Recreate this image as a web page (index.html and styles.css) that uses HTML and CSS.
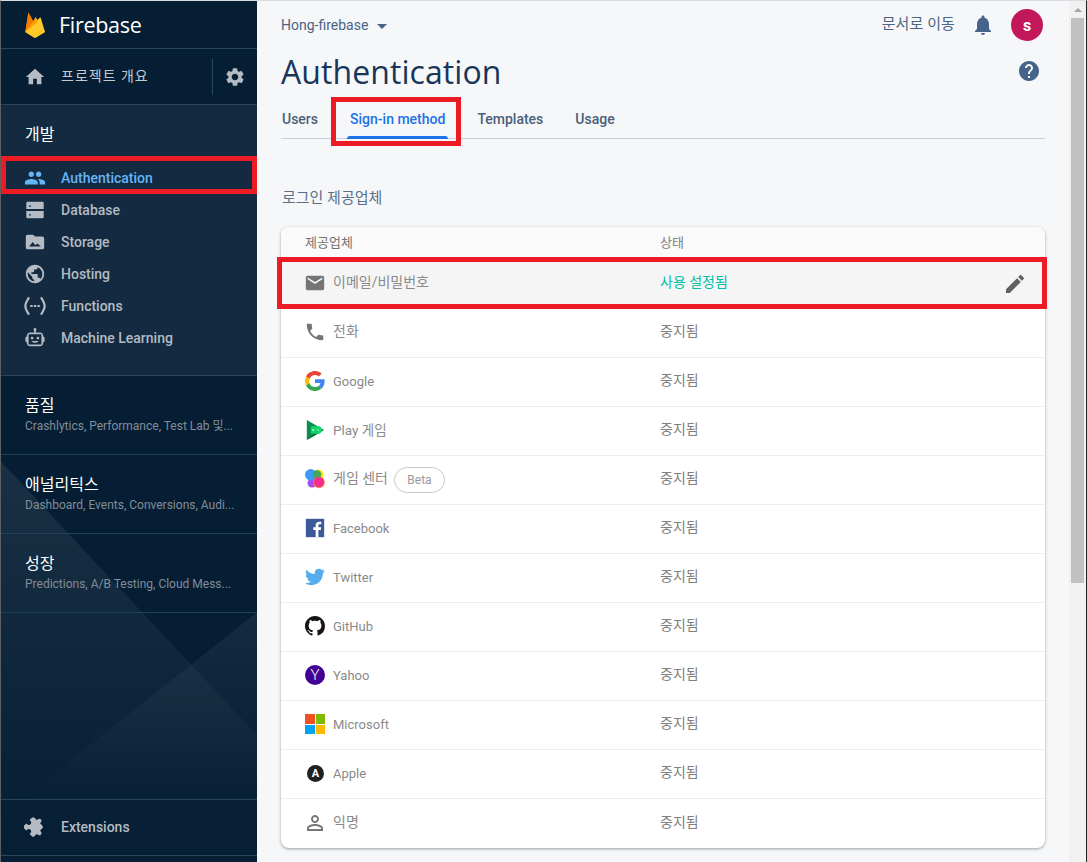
FILE: index.html
```html
<!DOCTYPE html>
<html lang="ko">
    <head>
        <meta charset="UTF-8">
        <meta name="viewport" content="width=device-width, initial-scale=1.0">
        <title>Authentication - Firebase</title>
        <link rel="stylesheet" href="styles.css">
    </head>
    <body>
        <!--Sidebar-->
        <nav class="side">
            <svg class="side-decor" viewBox="0 0 256 862" preserveAspectRatio="none" aria-hidden="true">
                <defs>
                    <linearGradient id="fadeA" x1="0" y1="0" x2="0" y2="1">
                        <stop offset="0" stop-color="#fff" stop-opacity="0.08"/>
                        <stop offset="1" stop-color="#fff" stop-opacity="0"/>
                    </linearGradient>
                    <linearGradient id="fadeB" x1="0" y1="0" x2="0" y2="1">
                        <stop offset="0" stop-color="#fff" stop-opacity="0.06"/>
                        <stop offset="1" stop-color="#fff" stop-opacity="0"/>
                    </linearGradient>
                </defs>
                <polygon points="0,461 256,735 256,862 0,862" fill="url(#fadeA)"/>
                <polygon points="256,612 20,800 256,800" fill="url(#fadeB)"/>
            </svg>

            <div class="side-logo">
                <svg class="flame" viewBox="0 0 20 26">
                    <path fill="#ffa000" d="M.3 20 3.4.4 8.3 9.4 10.6 5l9.4 15-10 6z"/>
                    <path fill="#f57c00" d="M.3 20 3.4.4 8.3 9.4z"/>
                    <path fill="#ffca28" d="M.3 20 15 5.6c.3-.3.6-.2.7.2L20 20l-8.6 5.3c-.9.5-1.9.5-2.8 0z"/>
                    <path fill="#ffa000" d="M.3 20 8.3 9.4 10.6 5l2 5z"/>
                </svg>
                <span class="logo-text">Firebase</span>
            </div>

            <div class="side-overview">
                <svg class="ico" viewBox="0 0 24 24"><path d="M10 20v-6h4v6h5v-8h3L12 3 2 12h3v8z"/></svg>
                <span class="overview-text">프로젝트 개요</span>
                <span class="overview-gear">
                    <svg class="ico" viewBox="0 0 24 24"><path d="M19.14 12.94c.04-.3.06-.61.06-.94 0-.32-.02-.64-.07-.94l2.03-1.58c.18-.14.23-.41.12-.61l-1.92-3.32c-.12-.22-.37-.29-.59-.22l-2.39.96c-.5-.38-1.03-.7-1.62-.94l-.36-2.54c-.04-.24-.24-.41-.48-.41h-3.84c-.24 0-.43.17-.47.41l-.36 2.54c-.59.24-1.13.57-1.62.94l-2.39-.96c-.22-.08-.47 0-.59.22L2.74 8.87c-.12.21-.08.47.12.61l2.03 1.58c-.05.3-.09.63-.09.94s.02.64.07.94l-2.03 1.58c-.18.14-.23.41-.12.61l1.92 3.32c.12.22.37.29.59.22l2.39-.96c.5.38 1.03.7 1.62.94l.36 2.54c.05.24.24.41.48.41h3.84c.24 0 .44-.17.47-.41l.36-2.54c.59-.24 1.13-.56 1.62-.94l2.39.96c.22.08.47 0 .59-.22l1.92-3.32c.12-.22.07-.47-.12-.61l-2.01-1.58zM12 15.6c-1.98 0-3.6-1.62-3.6-3.6s1.62-3.6 3.6-3.6 3.6 1.62 3.6 3.6-1.62 3.6-3.6 3.6z"/></svg>
                </span>
            </div>

            <div class="side-dev">
                <div class="side-title">개발</div>
                <a class="side-item is-active">
                    <svg class="ico" viewBox="0 0 24 24"><path d="M16 11c1.66 0 2.99-1.34 2.99-3S17.66 5 16 5c-1.66 0-3 1.34-3 3s1.34 3 3 3zm-8 0c1.66 0 2.99-1.34 2.99-3S9.66 5 8 5C6.34 5 5 6.34 5 8s1.34 3 3 3zm0 2c-2.33 0-7 1.17-7 3.5V19h14v-2.5c0-2.33-4.67-3.5-7-3.5zm8 0c-.29 0-.62.02-.97.05 1.16.84 1.97 1.97 1.97 3.45V19h6v-2.5c0-2.33-4.67-3.5-7-3.5z"/></svg>
                    Authentication
                    <span class="redbox redbox-side"></span>
                </a>
                <a class="side-item">
                    <svg class="ico" viewBox="0 0 24 24"><path fill-rule="evenodd" d="M4 3h16a1.5 1.5 0 0 1 1.5 1.5v6.5h-19V4.500A1.500 1.500 0 0 1 4 3zm1.500 4v1.500h2V7zM2.500 13h19v6.500A1.500 1.500 0 0 1 20 21H4a1.500 1.500 0 0 1-1.500-1.500zm3 3.500V18h2v-1.500z"/></svg>
                    Database
                </a>
                <a class="side-item">
                    <svg class="ico" viewBox="0 0 24 24"><path fill-rule="evenodd" d="M20 6h-8l-2-2H4c-1.100 0-2 .9-2 2v12c0 1.100.9 2 2 2h16c1.100 0 2-.9 2-2V8c0-1.100-.9-2-2-2zM5.500 17l4-5 3 3.500 2-2 4 3.500z"/></svg>
                    Storage
                </a>
                <a class="side-item">
                    <svg class="ico" viewBox="0 0 24 24"><path d="M12 2C6.480 2 2 6.480 2 12s4.480 10 10 10 10-4.480 10-10S17.520 2 12 2zm-1 17.930c-3.950-.49-7-3.850-7-7.930 0-.62.08-1.210.21-1.790L9 15v1c0 1.100.9 2 2 2v1.930zm6.900-2.540c-.26-.81-1-1.390-1.900-1.390h-1v-3c0-.55-.45-1-1-1H8v-2h2c.55 0 1-.45 1-1V7h2c1.100 0 2-.9 2-2v-.41c2.930 1.190 5 4.060 5 7.410 0 2.080-.8 3.970-2.100 5.390z"/></svg>
                    Hosting
                </a>
                <a class="side-item">
                    <svg class="ico" viewBox="0 0 24 24"><path d="M5.500 2.500C2.500 7 1.500 9.500 1.500 12s1 5 4 9.500M18.500 2.500c3 4.500 4 7 4 9.500s-1 5-4 9.500" fill="none" stroke="currentColor" stroke-width="2.400"/><path d="M6.800 11h2.600v2H6.800zm3.900 0h2.600v2h-2.600zm3.900 0h2.600v2h-2.600z"/></svg>
                    Functions
                </a>
                <a class="side-item">
                    <svg class="ico" viewBox="0 0 24 24"><path fill-rule="evenodd" d="M12 1a1.600 1.600 0 0 1 1 2.850V6h4a4 4 0 0 1 4 4v.3a2 2 0 0 1 1.500 1.950v2.500A2 2 0 0 1 21 16.700v.3a4 4 0 0 1-4 4H7a4 4 0 0 1-4-4v-.3a2 2 0 0 1-1.500-1.950v-2.500A2 2 0 0 1 3 10.300V10a4 4 0 0 1 4-4h4V3.850A1.600 1.600 0 0 1 12 1zM5 8v11h14V8zM8.800 10.500a1.500 1.500 0 1 0 0 3 1.500 1.500 0 0 0 0-3zm6.400 0a1.500 1.500 0 1 0 0 3 1.500 1.500 0 0 0 0-3zM8 15.200c1 1.300 2.400 1.900 4 1.900s3-.6 4-1.900z"/></svg>
                    Machine Learning
                </a>
            </div>

            <div class="side-group">
                <div class="side-title">품질</div>
                <div class="side-sub">Crashlytics, Performance, Test Lab 및...</div>
            </div>
            <div class="side-group">
                <div class="side-title">애널리틱스</div>
                <div class="side-sub">Dashboard, Events, Conversions, Audi...</div>
            </div>
            <div class="side-group">
                <div class="side-title">성장</div>
                <div class="side-sub">Predictions, A/B Testing, Cloud Mess...</div>
            </div>

            <div class="side-spacer"></div>

            <a class="side-extensions">
                <svg class="ico" viewBox="0 0 24 24"><path transform="rotate(45 12 12) translate(.6 .6) scale(.95)" d="M20.500 11H19V7c0-1.100-.9-2-2-2h-4V3.500C13 2.120 11.880 1 10.500 1S8 2.120 8 3.500V5H4c-1.100 0-1.990.9-1.990 2v3.800H3.500c1.490 0 2.700 1.210 2.700 2.700s-1.210 2.700-2.700 2.700H2V20c0 1.100.9 2 2 2h3.800v-1.500c0-1.490 1.210-2.700 2.700-2.700 1.490 0 2.700 1.210 2.700 2.700V22H17c1.100 0 2-.9 2-2v-4h1.500c1.380 0 2.500-1.120 2.500-2.500S21.880 11 20.500 11z"/></svg>
                Extensions
            </a>
            <div class="side-foot"></div>
        </nav>

        <!--Main content-->
        <main class="main">
            <div class="topbar">
                <span class="project">Hong-firebase<i class="caret"></i></span>
                <span class="docs">문서로 이동</span>
                <svg class="ico-top" viewBox="0 0 24 24"><path d="M12 22c1.100 0 2-.9 2-2h-4c0 1.100.89 2 2 2zm6-6v-5c0-3.070-1.640-5.640-4.500-6.320V4c0-.83-.67-1.500-1.500-1.500s-1.500.67-1.500 1.500v.68C7.630 5.360 6 7.920 6 11v5l-2 2v1h16v-1l-2-2z"/></svg>
                <span class="avatar">s</span>
            </div>

            <div class="title-row">
                <h1 class="title">Authentication</h1>
                <svg class="ico-top" viewBox="0 0 24 24"><path d="M12 2C6.480 2 2 6.480 2 12s4.480 10 10 10 10-4.480 10-10S17.520 2 12 2zm1 17h-2v-2h2v2zm2.070-7.750l-.9.920C13.450 12.900 13 13.500 13 15h-2v-.5c0-1.100.45-2.100 1.170-2.830l1.240-1.260c.37-.36.59-.86.59-1.410 0-1.100-.9-2-2-2s-2 .9-2 2H8c0-2.210 1.790-4 4-4s4 1.790 4 4c0 .88-.36 1.680-.93 2.250z"/></svg>
            </div>

            <div class="tabs">
                <a class="tab">Users</a>
                <a class="tab is-active">Sign-in method<span class="redbox redbox-tab"></span></a>
                <a class="tab">Templates</a>
                <a class="tab">Usage</a>
            </div>

            <h2 class="section-label">로그인 제공업체</h2>

            <div class="card">
                <div class="row row-head">
                    <span class="col-name">제공업체</span>
                    <span class="col-status">상태</span>
                </div>

                <div class="row row-on">
                    <span class="col-name">
                        <svg class="pico pico-m" viewBox="0 0 24 24" fill="#757575"><path d="M20 4H4c-1.100 0-1.990.9-1.990 2L2 18c0 1.100.9 2 2 2h16c1.100 0 2-.9 2-2V6c0-1.100-.9-2-2-2zm0 4l-8 5-8-5V6l8 5 8-5v2z"/></svg>
                        <span class="ko">이메일/비밀번호</span>
                    </span>
                    <span class="col-status status-on">사용 설정됨</span>
                    <svg class="pencil" viewBox="0 0 24 24"><path d="M3 17.250V21h3.750L17.810 9.940l-3.750-3.750L3 17.250zM20.710 7.040c.39-.39.39-1.020 0-1.410l-2.340-2.340c-.39-.39-1.020-.39-1.410 0l-1.830 1.830 3.750 3.750 1.830-1.830z"/></svg>
                    <span class="redbox redbox-row"></span>
                </div>

                <div class="row">
                    <span class="col-name">
                        <svg class="pico pico-m" viewBox="0 0 24 24" fill="#757575"><path d="M6.620 10.790c1.440 2.830 3.760 5.140 6.590 6.590l2.200-2.200c.27-.27.67-.36 1.020-.24 1.120.37 2.330.57 3.570.57.55 0 1 .45 1 1V20c0 .55-.45 1-1 1-9.390 0-17-7.610-17-17 0-.55.45-1 1-1h3.500c.55 0 1 .45 1 1 0 1.250.2 2.450.57 3.570.11.35.03.74-.25 1.020l-2.200 2.200z"/></svg>
                        <span class="ko">전화</span>
                    </span>
                    <span class="col-status">중지됨</span>
                </div>

                <div class="row">
                    <span class="col-name">
                        <svg class="pico" viewBox="0 0 48 48">
                            <path fill="#EA4335" d="M24 9.500c3.540 0 6.710 1.220 9.210 3.600l6.850-6.850C35.900 2.380 30.470 0 24 0 14.620 0 6.510 5.380 2.560 13.220l7.980 6.190C12.430 13.720 17.740 9.500 24 9.500z"/>
                            <path fill="#4285F4" d="M46.980 24.550c0-1.570-.15-3.090-.38-4.550H24v9.020h12.940c-.58 2.960-2.260 5.480-4.780 7.180l7.730 6c4.510-4.180 7.090-10.360 7.090-17.650z"/>
                            <path fill="#FBBC05" d="M10.530 28.590c-.48-1.450-.76-2.990-.76-4.590s.27-3.140.76-4.590l-7.980-6.190C.92 16.460 0 20.120 0 24c0 3.880.92 7.540 2.560 10.780l7.970-6.190z"/>
                            <path fill="#34A853" d="M24 48c6.480 0 11.930-2.130 15.890-5.810l-7.730-6c-2.150 1.450-4.920 2.300-8.160 2.300-6.260 0-11.570-4.220-13.470-9.910l-7.980 6.190C6.510 42.620 14.620 48 24 48z"/>
                        </svg>
                        Google
                    </span>
                    <span class="col-status">중지됨</span>
                </div>

                <div class="row">
                    <span class="col-name">
                        <svg class="pico" viewBox="1 1 20 22">
                            <path fill="#0a8f4c" d="M2 1v22l19-11z"/>
                            <path fill="#056b38" d="M2 23l7-6.500 6-1.500 6-3z"/>
                            <path fill="#0ed66a" d="M6.500 8h8a4 4 0 0 1 0 8h-8z"/>
                            <path fill="#c8ffe0" d="M8.500 11h1v.6h.6v1h-.6v.6h-1v-.6h-.6v-1h.6zm4.500 0h1v1h-1zm1.500 1h1v1h-1z"/>
                        </svg>
                        <span class="ko-mix">Play 게임</span>
                    </span>
                    <span class="col-status">중지됨</span>
                </div>

                <div class="row">
                    <span class="col-name">
                        <svg class="pico" viewBox="0 0 20 20">
                            <circle cx="13" cy="6" r="5.500" fill="#ffe000"/>
                            <circle cx="7" cy="14" r="4.500" fill="#a64df0"/>
                            <circle cx="5.700" cy="5.800" r="5.700" fill="#3d9bf5"/>
                            <circle cx="12" cy="5.500" r="4.200" fill="#3fa85a"/>
                            <circle cx="14" cy="13.500" r="5.800" fill="#ff9052"/>
                            <circle cx="14" cy="13" r="5.200" fill="#f5308a"/>
                        </svg>
                        <span class="ko">게임 센터</span>
                        <span class="beta">Beta</span>
                    </span>
                    <span class="col-status">중지됨</span>
                </div>

                <div class="row">
                    <span class="col-name">
                        <svg class="pico pico-m" viewBox="0 0 24 24">
                            <path fill="#3b5998" d="M2 2h20v20H2z"/>
                            <path fill="#fff" d="M15.800 22v-7.700h2.600l.4-3h-3V9.400c0-.87.24-1.460 1.500-1.460h1.600V5.250c-.28-.04-1.230-.12-2.330-.12-2.300 0-3.870 1.400-3.870 3.980v2.200h-2.600v3h2.600V22z"/>
                        </svg>
                        Facebook
                    </span>
                    <span class="col-status">중지됨</span>
                </div>

                <div class="row">
                    <span class="col-name">
                        <svg class="pico" viewBox="0 0 24 24"><path fill="#55acee" d="M23.950 4.570a10 10 0 0 1-2.820.77 4.960 4.960 0 0 0 2.160-2.720c-.95.55-2 .96-3.130 1.190a4.920 4.920 0 0 0-8.380 4.480C7.690 8.100 4.070 6.130 1.640 3.160a4.820 4.820 0 0 0-.67 2.480c0 1.710.87 3.210 2.190 4.100a4.900 4.900 0 0 1-2.230-.62v.06a4.920 4.920 0 0 0 3.950 4.830 5 5 0 0 1-2.210.08 4.940 4.940 0 0 0 4.600 3.420A9.870 9.870 0 0 1 0 19.540a14 14 0 0 0 7.560 2.210c9.050 0 14-7.500 14-13.980 0-.21 0-.42-.02-.63a9.940 9.940 0 0 0 2.460-2.550z"/></svg>
                        Twitter
                    </span>
                    <span class="col-status">중지됨</span>
                </div>

                <div class="row">
                    <span class="col-name">
                        <svg class="pico" viewBox="0 0 16 16"><path fill="#161514" d="M8 0C3.580 0 0 3.580 0 8c0 3.540 2.290 6.530 5.470 7.590.4.070.55-.17.55-.38 0-.19-.01-.82-.01-1.490-2.010.37-2.530-.49-2.690-.94-.09-.23-.48-.94-.82-1.130-.28-.15-.68-.52-.01-.53.63-.01 1.080.58 1.230.82.72 1.210 1.870.87 2.330.66.070-.52.28-.87.51-1.070-1.780-.2-3.640-.89-3.640-3.950 0-.87.31-1.590.82-2.150-.08-.2-.36-1.020.08-2.120 0 0 .67-.21 2.200.82.64-.18 1.320-.27 2-.27.68 0 1.360.09 2 .27 1.530-1.040 2.200-.82 2.200-.82.44 1.100.16 1.920.08 2.120.51.56.82 1.270.82 2.150 0 3.070-1.870 3.750-3.650 3.950.29.25.54.73.54 1.480 0 1.070-.01 1.930-.01 2.200 0 .21.15.46.55.38A8.013 8.013 0 0 0 16 8c0-4.420-3.580-8-8-8z"/></svg>
                        GitHub
                    </span>
                    <span class="col-status">중지됨</span>
                </div>

                <div class="row">
                    <span class="col-name">
                        <span class="disc disc-yahoo">Y</span>
                        Yahoo
                    </span>
                    <span class="col-status">중지됨</span>
                </div>

                <div class="row">
                    <span class="col-name">
                        <span class="ms"><i class="ms-r"></i><i class="ms-g"></i><i class="ms-b"></i><i class="ms-y"></i></span>
                        Microsoft
                    </span>
                    <span class="col-status">중지됨</span>
                </div>

                <div class="row">
                    <span class="col-name">
                        <span class="disc disc-apple">A</span>
                        Apple
                    </span>
                    <span class="col-status">중지됨</span>
                </div>

                <div class="row">
                    <span class="col-name">
                        <svg class="pico pico-l" viewBox="0 0 24 24" fill="#757575"><path d="M12 5.900c1.160 0 2.100.94 2.100 2.100s-.94 2.100-2.100 2.100S9.900 9.160 9.900 8s.94-2.100 2.100-2.100m0 9c2.970 0 6.100 1.460 6.100 2.100v1.100H5.900V17c0-.64 3.130-2.100 6.100-2.100M12 4C9.790 4 8 5.790 8 8s1.790 4 4 4 4-1.790 4-4-1.790-4-4-4zm0 9c-2.670 0-8 1.340-8 4v3h16v-3c0-2.660-5.330-4-8-4z"/></svg>
                        <span class="ko">익명</span>
                    </span>
                    <span class="col-status">중지됨</span>
                </div>
            </div>
        </main>

        <!--Window scrollbar-->
        <div class="scroll">
            <i class="scroll-arrow"></i>
            <div class="scroll-thumb"></div>
        </div>
    </body>
</html>
```

FILE: styles.css
```css
/*Reset*/
html,
body,
h1,
h2 {
    margin: 0;
    padding: 0;
    font-size: 100%;
    font-weight: normal;
}

*, *::before, *::after {
    box-sizing: border-box;
}

/*Page frame*/
body {
    display: flex;
    width: 1087px;
    height: 862px;
    overflow: hidden;
    border-top: 1px solid #dadce0;
    border-left: 1px solid #5f5f5f;
    border-right: 1px solid #222;
    background: #f6f7f9;
    font-family: Roboto, "Noto Sans CJK KR", sans-serif;
}

.redbox {
    position: absolute;
    z-index: 3;
    border: 5px solid #ed1c24;
    pointer-events: none;
}

/*Sidebar*/
.side {
    position: relative;
    display: flex;
    flex-direction: column;
    flex: none;
    width: 256px;
    background: #051e34;
    color: #fff;
}

.side > * {
    position: relative;
    z-index: 1;
}

.side > .side-decor {
    position: absolute;
    top: 0;
    left: 0;
    z-index: 0;
    width: 100%;
    height: 100%;
}

.ico {
    flex: none;
    width: 22px;
    height: 22px;
    fill: currentColor;
}

.side-logo {
    display: flex;
    align-items: center;
    flex: none;
    height: 48px;
    padding-left: 24px;
    border-bottom: 1px solid #2a4560;
}

.flame {
    width: 20px;
    height: 26px;
}

.logo-text {
    margin-left: 14px;
    margin-bottom: 1px;
    font-family: "Open Sans", sans-serif;
    font-size: 21.5px;
    letter-spacing: -0.3px;
}

.side-overview {
    display: flex;
    align-items: center;
    flex: none;
    height: 56px;
    padding-left: 23px;
    border-bottom: 1px solid #2a4560;
    color: #b4bbc3;
}

.overview-text {
    margin-left: 15px;
    margin-bottom: 3px;
    font-size: 14px;
    letter-spacing: 1px;
    color: #c4cad0;
}

.overview-gear {
    display: flex;
    align-items: center;
    height: 36px;
    margin-left: auto;
    margin-right: 11px;
    padding-left: 11px;
    border-left: 1px solid #2a4560;
}

.side-dev {
    flex: none;
    height: 271px;
    padding-top: 20px;
    background: #132a40;
    border-bottom: 1px solid #2a4560;
}

.side-title {
    padding-left: 24px;
    font-size: 16px;
    line-height: 20px;
    color: #fff;
}

.side-dev .side-title {
    margin-bottom: 17px;
}

.side-item,
.side-extensions {
    position: relative;
    display: flex;
    align-items: center;
    gap: 15px;
    height: 32px;
    padding-left: 23px;
    font-size: 14px;
    font-weight: 500;
    color: #b4bbc3;
}

.side-item.is-active {
    color: #64b5f6;
}

.redbox-side {
    top: -6px;
    right: 0;
    bottom: 0;
    left: 0;
}

.side-group {
    flex: none;
    height: 79px;
    padding-top: 20px;
    border-bottom: 1px solid #20405c;
}

.side-sub {
    padding-left: 24px;
    font-size: 12px;
    line-height: 20px;
    color: #818d99;
    white-space: nowrap;
}

.side-spacer {
    flex: 1;
}

.side-extensions {
    flex: none;
    height: 57px;
    padding-bottom: 2px;
    border-top: 1px solid #2a4560;
    border-bottom: 1px solid #2a4560;
}

.side-foot {
    flex: none;
    height: 6px;
}

/*Main*/
.main {
    flex: 1;
    min-width: 0;
    padding: 0 24px;
}

.topbar {
    display: flex;
    align-items: center;
    height: 48px;
    padding-right: 2px;
    color: #4a6583;
    font-size: 14px;
}

.project {
    display: flex;
    align-items: center;
    margin-right: auto;
}

.caret {
    width: 0;
    height: 0;
    margin-left: 9px;
    margin-top: 2px;
    border-left: 5px solid transparent;
    border-right: 5px solid transparent;
    border-top: 5px solid #4a6583;
}

.docs {
    margin-right: 16px;
    padding-bottom: 6px;
    font-size: 15px;
    letter-spacing: 0.1px;
}

.ico-top {
    flex: none;
    width: 24px;
    height: 24px;
    fill: #45648a;
}

.avatar {
    display: flex;
    align-items: center;
    justify-content: center;
    width: 32px;
    height: 32px;
    margin-left: 16px;
    border-radius: 50%;
    background: #c2185b;
    color: #fff;
    font-size: 16px;
    font-weight: 700;
}

.title-row {
    display: flex;
    align-items: center;
    justify-content: space-between;
    height: 47px;
    padding-right: 4px;
    padding-bottom: 2px;
}

.title-row .ico-top {
    margin-bottom: 2px;
}

.title {
    font-family: "Open Sans", sans-serif;
    font-size: 32px;
    letter-spacing: 0.07px;
    color: #17365a;
}

.tabs {
    display: flex;
    gap: 32px;
    height: 43px;
    padding-left: 1px;
    border-bottom: 1px solid #c3d0de;
}

.tab {
    position: relative;
    height: 43px;
    font-size: 14px;
    font-weight: 500;
    line-height: 46px;
    color: #4a6078;
}

.tab.is-active {
    color: #1a73e8;
}

.tab.is-active::after {
    content: "";
    position: absolute;
    left: -3px;
    right: -3px;
    bottom: 0;
    height: 3px;
    border-radius: 3px 3px 0 0;
    background: #1a73e8;
}

.redbox-tab {
    top: 1px;
    right: -16px;
    bottom: -7px;
    left: -19px;
}

.section-label {
    margin-top: 49px;
    margin-bottom: 19px;
    padding-left: 1px;
    font-size: 15px;
    line-height: 20px;
    color: #5a7088;
}

/*Providers card*/
.card {
    border-radius: 8px;
    background: #fff;
    box-shadow: 0 1px 2px rgba(60, 64, 67, 0.3), 0 1px 3px 1px rgba(60, 64, 67, 0.15);
}

.row {
    position: relative;
    display: flex;
    align-items: center;
    height: 49px;
    padding-left: 24px;
    padding-bottom: 2px;
    border-bottom: 1px solid #eee;
    font-size: 13px;
    color: #8a8a8a;
}

.row:last-child {
    border-bottom: 0;
    border-radius: 0 0 8px 8px;
}

.row-head {
    height: 33px;
    border-bottom: 0;
    border-radius: 8px 8px 0 0;
    background: #fafafa;
    font-size: 13px;
    color: #757575;
}

.row-head .col-name,
.row-head .col-status {
    padding-bottom: 3px;
    font-size: 13px;
}

.row-on {
    background: #f5f5f5;
}

.col-name {
    display: flex;
    align-items: center;
    width: 355px;
}

.col-status {
    padding-bottom: 4px;
    font-size: 14px;
    color: #808080;
}

.status-on {
    color: #00bfa5;
}

.ko {
    padding-bottom: 4px;
    font-size: 14px;
}

.ko-mix {
    padding-bottom: 2px;
    font-size: 13.5px;
}

.pico {
    flex: none;
    width: 20px;
    height: 20px;
    margin-right: 8px;
}

.pico-m {
    width: 22px;
    height: 22px;
    margin-left: -1px;
    margin-right: 7px;
}

.pico-l {
    width: 24px;
    height: 24px;
    margin-left: -2px;
    margin-right: 6px;
}

.pencil {
    width: 24px;
    height: 24px;
    margin-top: 2px;
    margin-left: auto;
    margin-right: 18px;
    fill: #616161;
}

.redbox-row {
    top: -3px;
    right: -2px;
    bottom: -1px;
    left: -4px;
}

.beta {
    width: 51px;
    height: 26px;
    margin-top: 2px;
    margin-left: 6px;
    border: 1px solid #c8c8c8;
    border-radius: 13px;
    font-size: 12px;
    line-height: 24px;
    text-align: center;
    color: #9a9a9a;
}

.disc {
    display: flex;
    align-items: center;
    justify-content: center;
    flex: none;
    border-radius: 50%;
    color: #fff;
}

.disc-yahoo {
    width: 20px;
    height: 20px;
    margin-right: 8px;
    background: #410093;
    font-size: 15px;
    font-weight: 300;
}

.disc-apple {
    width: 17px;
    height: 17px;
    margin: 0 9px 0 2px;
    background: #212121;
    font-size: 11px;
    font-weight: 700;
}

.ms {
    display: grid;
    grid-template-columns: 1fr 1fr;
    gap: 1px;
    flex: none;
    width: 20px;
    height: 20px;
    margin-right: 8px;
}

.ms-r {
    background: #f25022;
}

.ms-g {
    background: #7fba00;
}

.ms-b {
    background: #00a4ef;
}

.ms-y {
    background: #ffb900;
}

/*Scrollbar*/
.scroll {
    position: relative;
    flex: none;
    width: 17px;
    background: #f1f1f1;
}

.scroll-arrow {
    position: absolute;
    top: 7px;
    left: 5px;
    width: 0;
    height: 0;
    border-left: 4px solid transparent;
    border-right: 4px solid transparent;
    border-bottom: 4px solid #a3a3a3;
}

.scroll-thumb {
    position: absolute;
    top: 17px;
    left: 2px;
    width: 13px;
    height: 565px;
    background: #c1c1c1;
}
```
